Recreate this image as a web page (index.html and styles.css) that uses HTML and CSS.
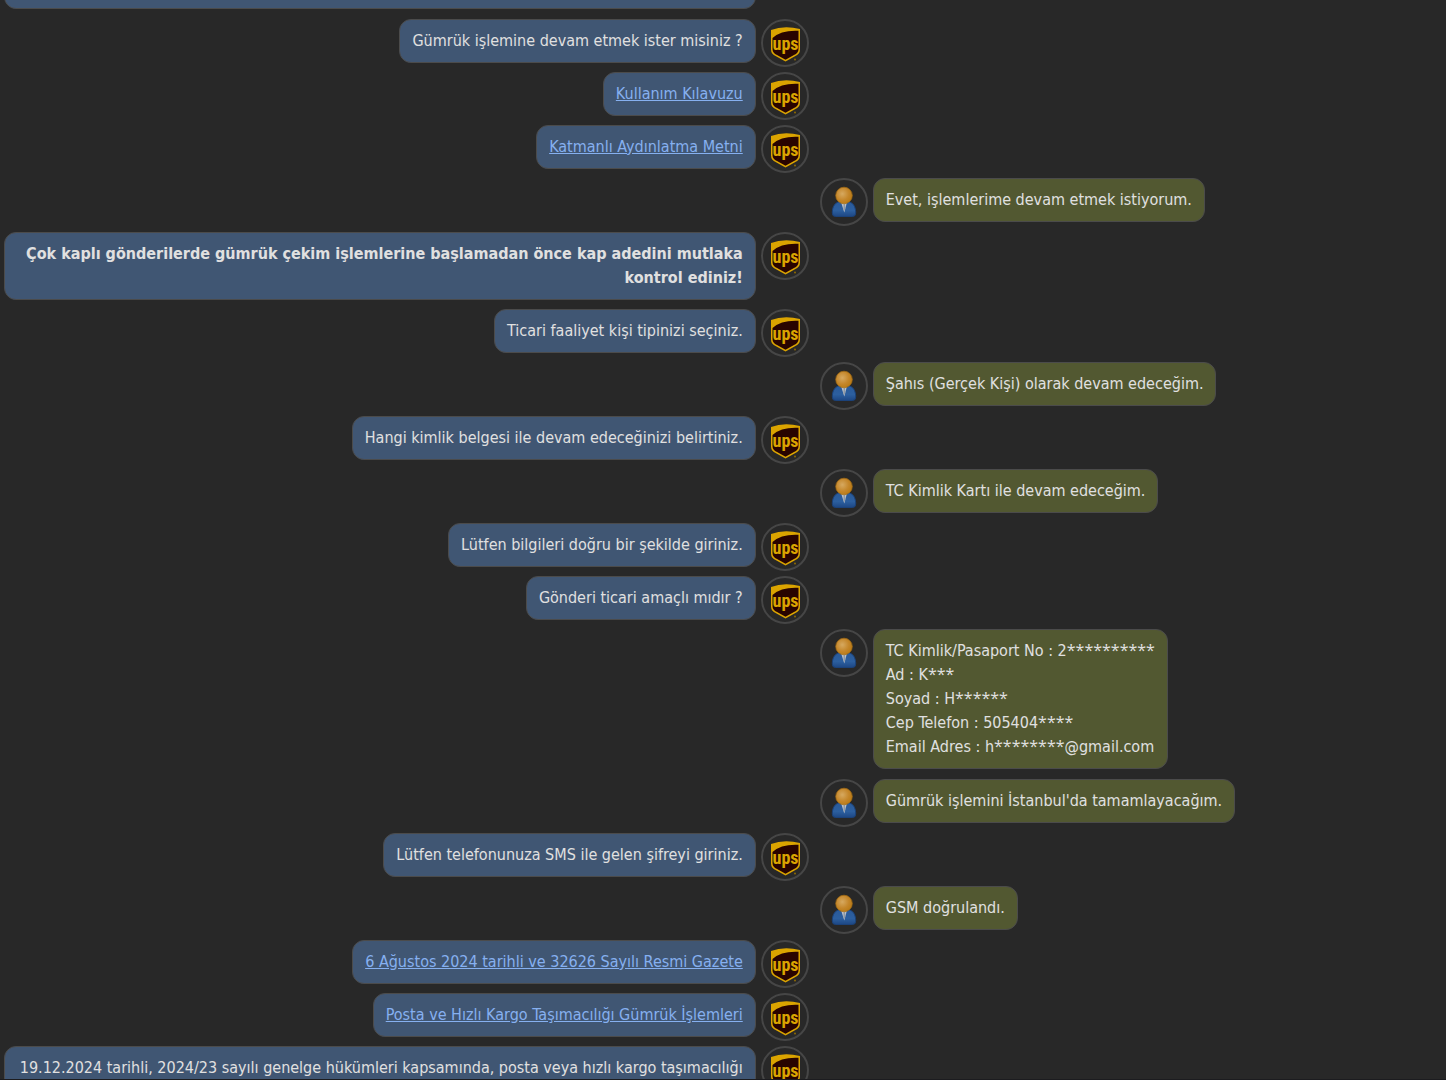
FILE: index.html
```html
<!DOCTYPE html>
<html lang="tr">
<head>
  <meta charset="utf-8">
  <meta name="viewport" content="width=device-width, initial-scale=1">
  <title>UPS Gümrük İşlemleri</title>
  <link rel="stylesheet" href="styles.css">
</head>
<body>
  <svg class="sprite" aria-hidden="true">
    <defs>
      <radialGradient id="head-fill" cx="0.4" cy="0.4" r="0.65">
        <stop offset="0" stop-color="#d6a960"/>
        <stop offset="0.6" stop-color="#c4862a"/>
        <stop offset="1" stop-color="#b87a14"/>
      </radialGradient>
      <linearGradient id="coat-fill" x1="0" y1="0" x2="0" y2="1">
        <stop offset="0" stop-color="#2a5a99"/>
        <stop offset="0.6" stop-color="#2c5f9f"/>
        <stop offset="1" stop-color="#1d4784"/>
      </linearGradient>
    </defs>
    <symbol id="ups" viewBox="0 0 44 44">
      <path d="M8 9Q21 4 37 8V28.500Q37 33 32 35.300L22.500 40.500L13 35.300Q8 33 8 28.500Z" fill="#dba400"/>
      <path d="M9.500 17Q18 9 35.500 9.800V28Q35.500 32 31 34L22.500 38.700L14 34Q9.500 32 9.500 28Z" fill="#290400"/>
      <text x="22.500" y="29" class="logo-text">ups</text>
      <circle cx="32" cy="38.500" r="1" fill="#8d6a05"/>
    </symbol>
    <symbol id="person" viewBox="0 0 44 44">
      <path d="M10.300 33C10.300 27 12.500 22.500 18 21.500H26C31.500 22.500 33.700 27 33.700 33Q33.700 36.500 30.500 36.500H13.500Q10.300 36.500 10.300 33Z" fill="url(#coat-fill)" stroke="#1b427a" stroke-width="1"/>
      <path d="M19 22H25L22.300 32.500Z" fill="#bdc3ca"/>
      <path d="M21.600 24H23L23.300 29L22.300 31L21.400 29Z" fill="#8e99a6"/>
      <circle cx="22" cy="15.500" r="8.300" fill="url(#head-fill)" stroke="#a36c12" stroke-width="0.700"/>
    </symbol>
  </svg>

  <main class="chat">
    <div class="message bot scrolled"><div class="bubble wide tall"></div><svg class="avatar"><use href="#person"/></svg></div>
    <div class="message bot"><div class="bubble">Gümrük işlemine devam etmek ister misiniz ?</div><svg class="avatar"><use href="#ups"/></svg></div>
    <div class="message bot"><div class="bubble"><a href="#">Kullanım Kılavuzu</a></div><svg class="avatar"><use href="#ups"/></svg></div>
    <div class="message bot"><div class="bubble"><a href="#">Katmanlı Aydınlatma Metni</a></div><svg class="avatar"><use href="#ups"/></svg></div>
    <div class="message user"><svg class="avatar"><use href="#person"/></svg><div class="bubble">Evet, işlemlerime devam etmek istiyorum.</div></div>
    <div class="message bot"><div class="bubble wide"><strong>Çok kaplı gönderilerde gümrük çekim işlemlerine başlamadan önce kap adedini mutlaka<br>kontrol ediniz!</strong></div><svg class="avatar"><use href="#ups"/></svg></div>
    <div class="message bot"><div class="bubble">Ticari faaliyet kişi tipinizi seçiniz.</div><svg class="avatar"><use href="#ups"/></svg></div>
    <div class="message user"><svg class="avatar"><use href="#person"/></svg><div class="bubble">Şahıs (Gerçek Kişi) olarak devam edeceğim.</div></div>
    <div class="message bot"><div class="bubble">Hangi kimlik belgesi ile devam edeceğinizi belirtiniz.</div><svg class="avatar"><use href="#ups"/></svg></div>
    <div class="message user"><svg class="avatar"><use href="#person"/></svg><div class="bubble">TC Kimlik Kartı ile devam edeceğim.</div></div>
    <div class="message bot"><div class="bubble">Lütfen bilgileri doğru bir şekilde giriniz.</div><svg class="avatar"><use href="#ups"/></svg></div>
    <div class="message bot"><div class="bubble">Gönderi ticari amaçlı mıdır ?</div><svg class="avatar"><use href="#ups"/></svg></div>
    <div class="message user"><svg class="avatar"><use href="#person"/></svg><div class="bubble">TC Kimlik/Pasaport No : 2<span class="mask">**********</span><br>Ad : K<span class="mask">***</span><br>Soyad : H<span class="mask">******</span><br>Cep Telefon : 505404<span class="mask">****</span><br>Email Adres : h<span class="mask">********</span>@gmail.com</div></div>
    <div class="message user"><svg class="avatar"><use href="#person"/></svg><div class="bubble">Gümrük işlemini İstanbul'da tamamlayacağım.</div></div>
    <div class="message bot"><div class="bubble">Lütfen telefonunuza SMS ile gelen şifreyi giriniz.</div><svg class="avatar"><use href="#ups"/></svg></div>
    <div class="message user"><svg class="avatar"><use href="#person"/></svg><div class="bubble">GSM doğrulandı.</div></div>
    <div class="message bot"><div class="bubble"><a href="#">6 Ağustos 2024 tarihli ve 32626 Sayılı Resmi Gazete</a></div><svg class="avatar"><use href="#ups"/></svg></div>
    <div class="message bot"><div class="bubble"><a href="#">Posta ve Hızlı Kargo Taşımacılığı Gümrük İşlemleri</a></div><svg class="avatar"><use href="#ups"/></svg></div>
    <div class="message bot"><div class="bubble wide tall">19.12.2024 tarihli, 2024/23 sayılı genelge hükümleri kapsamında, posta veya hızlı kargo taşımacılığı</div><svg class="avatar"><use href="#ups"/></svg></div>
  </main>
</body>
</html>
```
FILE: styles.css
```css
* {
  box-sizing: border-box;
}

body {
  margin: 0;
  background: #282828;
  color: #e0e0e0;
  font: 16px/24px "DejaVu Sans Condensed", "DejaVu Sans", sans-serif;
}

.sprite {
  position: absolute;
  width: 0;
  height: 0;
}

/* The conversation fills the window; older and newer messages are cut at its edges. */
.chat {
  height: 100vh;
  overflow: hidden;
  border-bottom: 1px solid #1c1c1f;
}

.message {
  display: flex;
  align-items: flex-start;
  gap: 5px;
}

.bot {
  width: calc(56% - 1px);
  margin-bottom: 9px;
  padding-left: 4px;
  justify-content: flex-end;
  text-align: right;
}

.user {
  margin-bottom: 10px;
  padding-left: calc(56% + 10px);
}

.scrolled {
  margin-top: -59px;
  margin-bottom: 10px;
}

.bubble {
  padding: 9px 12px;
  border: 1px solid #4b4b4b;
  border-radius: 12px;
}

.bot .bubble {
  background: #405673;
}

.user .bubble {
  background: #525831;
}

.wide {
  flex: 1;
}

.tall {
  min-height: 68px;
}

/* The round picture may hang below a one-line bubble without making its row taller. */
.avatar {
  flex: none;
  width: 48px;
  height: 48px;
  margin-bottom: -4px;
  border: 2px solid #464646;
  border-radius: 50%;
}

.logo-text {
  fill: #dba400;
  font: bold 18px "Roboto Condensed", Roboto, sans-serif;
  text-anchor: middle;
}

.mask {
  font-family: "Open Sans", sans-serif;
  line-height: 16px;
}

a {
  color: #86b0f0;
  text-decoration: underline;
}
```
